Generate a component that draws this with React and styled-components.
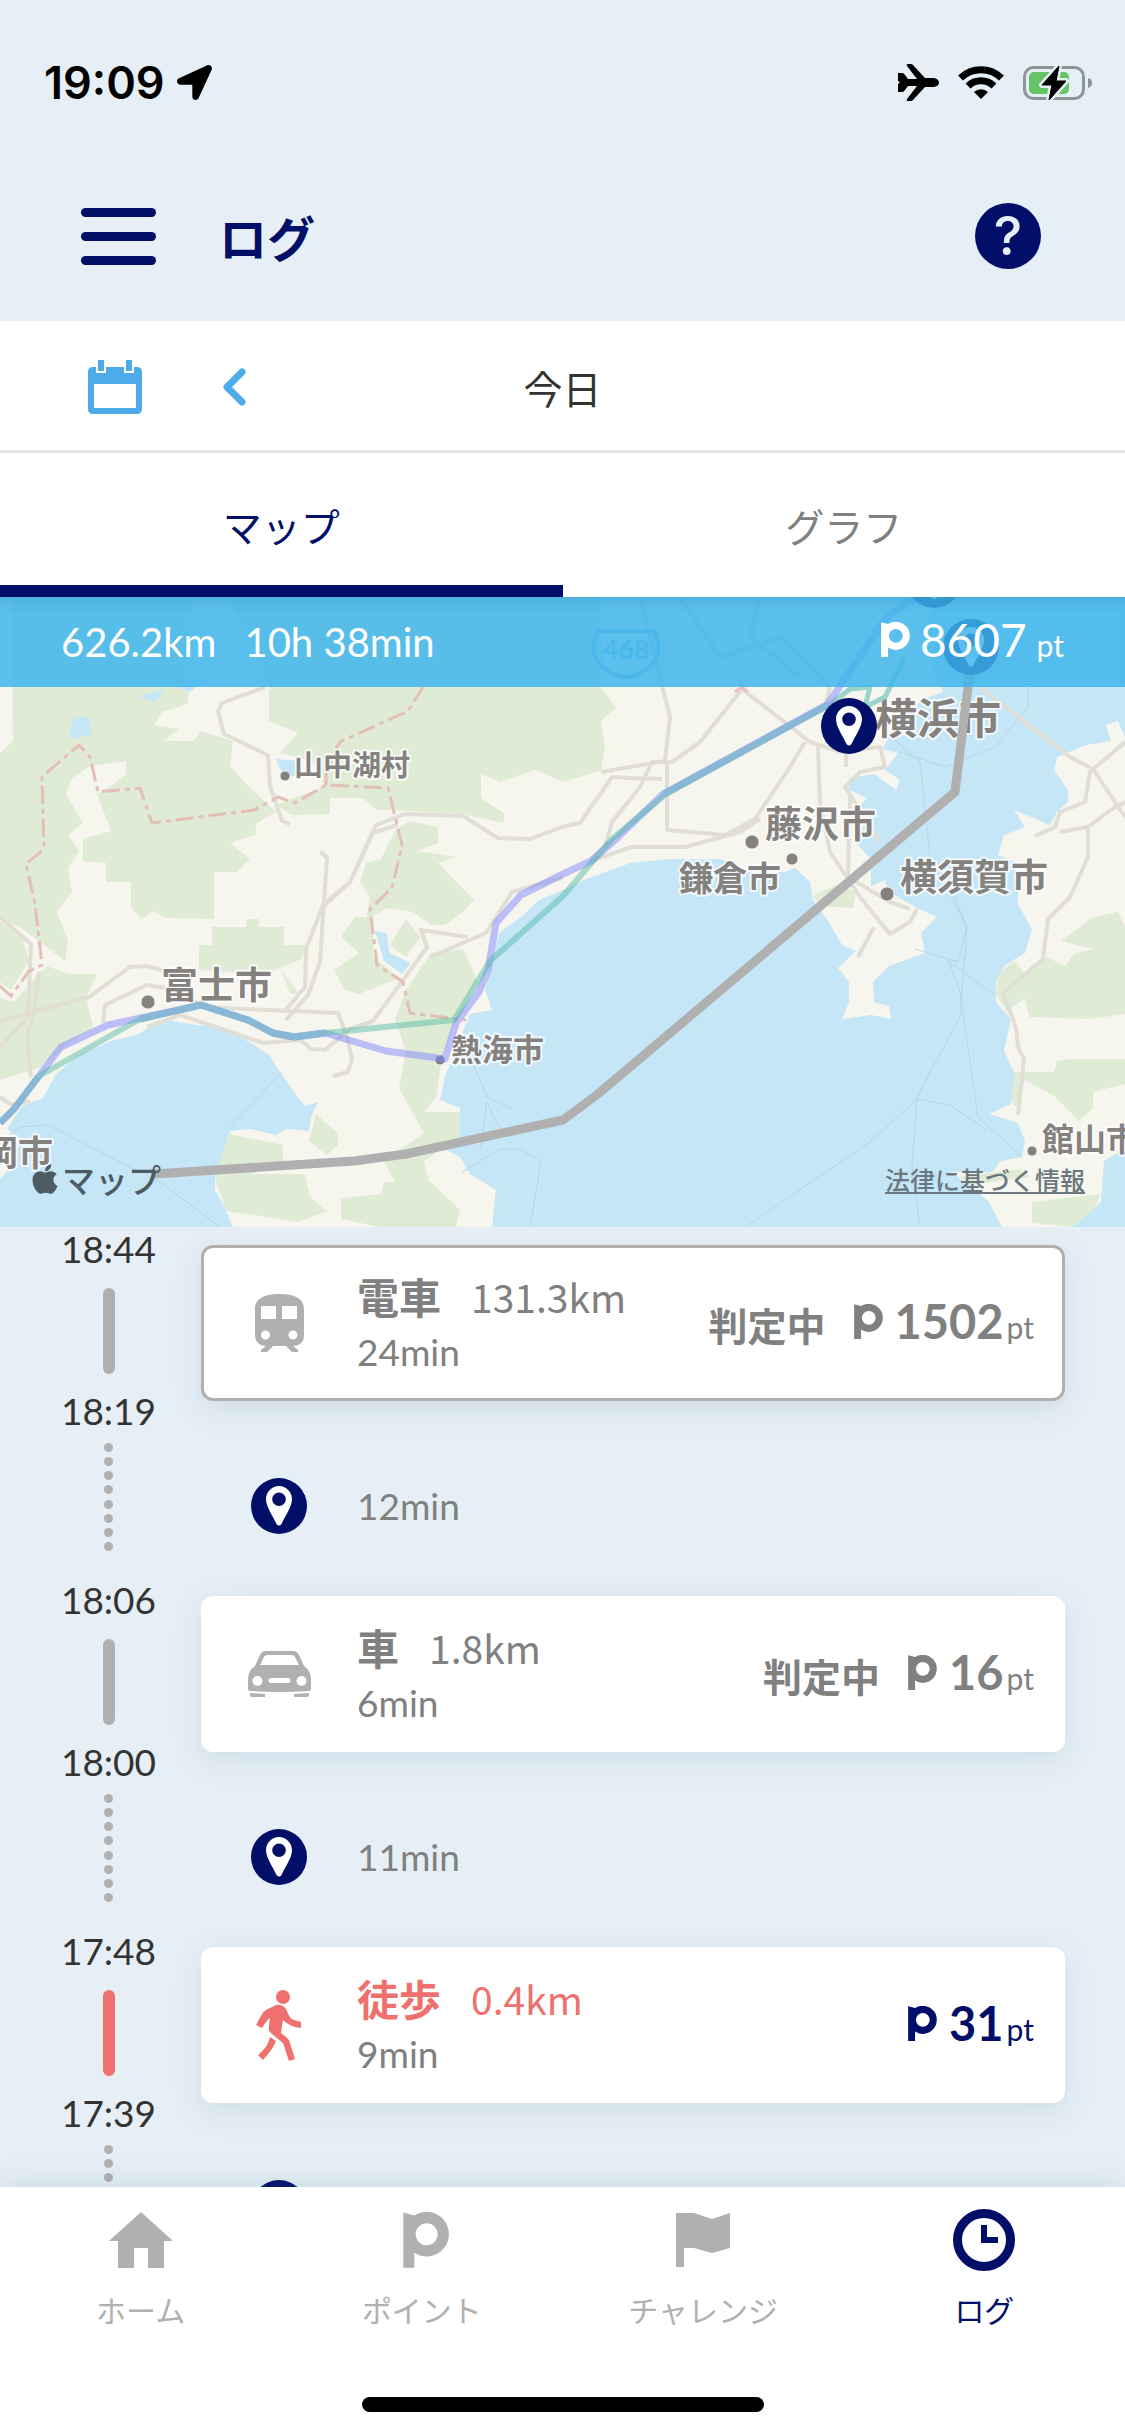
import React, { useState } from 'react';
import styled, { createGlobalStyle, ThemeProvider } from 'styled-components';
import { FaApple, FaLocationArrow } from 'react-icons/fa';

const theme = {
    navy: '#020f68',
    sky: '#4dabea',
    page: '#e6eff5',
    grey: '#808080',
    light: '#b0b0b0',
    coral: '#ee716d',
    text: '#333',
    latin: "Lato, 'Noto Sans CJK JP', sans-serif",
    japanese: "'Noto Sans CJK JP', sans-serif"
};

const GlobalStyle = createGlobalStyle`
    * {
        box-sizing: border-box;
    }

    body {
        margin: 0;
        background: ${theme.page};
        font-family: ${theme.japanese};
        color: ${theme.text};
    }

    button {
        border: 0;
        padding: 0;
        background: none;
        color: inherit;
        font: inherit;
        cursor: pointer;
    }

    svg {
        display: block;
    }
`;

const Screen = styled.div`
    display: flex;
    flex-direction: column;
    height: 100vh;
    overflow: hidden;
`;

const StatusBar = styled.div`
    display: flex;
    flex-shrink: 0;
    align-items: center;
    justify-content: space-between;
    height: 153px;
    padding: 12px 32px 0 44px;
    color: #000;
`;

const StatusGroup = styled.div`
    display: flex;
    align-items: center;
    gap: ${props => props.gap}px;
`;

const Clock = styled.span`
    font: 600 45px/48px Inter, sans-serif;
`;

const Header = styled.header`
    display: flex;
    flex-shrink: 0;
    align-items: center;
    height: 168px;
    padding: 0 84px 2px 81px;
    color: ${props => props.theme.navy};
`;

const MenuButton = styled.button`
    display: grid;
    gap: 15px;
    width: 75px;
`;

const MenuLine = styled.span`
    height: 9px;
    border-radius: 5px;
    background: ${props => props.theme.navy};
`;

const Title = styled.h1`
    flex: 1;
    margin: 0 0 0 63px;
    font-size: 48px;
    line-height: 60px;
    font-weight: 700;
`;

const HelpButton = styled.button`
    width: 66px;
    height: 66px;
    border-radius: 50%;
    background: ${props => props.theme.navy};

    && {
        color: ${props => props.theme.page};
        font: 500 54px/66px Inter, sans-serif;
    }
`;

const DateBar = styled.div`
    display: grid;
    grid-template-columns: 1fr auto 1fr;
    flex-shrink: 0;
    align-items: center;
    height: 132px;
    padding: 2px 88px 0;
    border-bottom: 3px solid #e3e3e3;
    background: #fff;
    font-size: 39px;
    line-height: 56px;
`;

const DateControls = styled.div`
    display: flex;
    align-items: center;
    gap: 79px;
`;

const Tabs = styled.div`
    display: flex;
    flex-shrink: 0;
    background: #fff;
`;

const Tab = styled.button`
    flex: 1;
    height: 144px;

    && {
        border-top: 12px solid transparent;
        border-bottom: 12px solid ${props => props.$active ? props.theme.navy : 'transparent'};
        color: ${props => props.$active ? props.theme.navy : props.theme.grey};
        font-size: 39px;
        line-height: 56px;
    }
`;

const MapArea = styled.section`
    position: relative;
    flex-shrink: 0;
    aspect-ratio: 1125 / 630;
    overflow: hidden;

    > svg {
        width: 100%;
        height: 100%;
    }
`;

const Summary = styled.div`
    position: absolute;
    top: 0;
    left: 0;
    right: 0;
    display: flex;
    align-items: center;
    gap: 28px;
    height: 90px;
    padding: 0 61px;
    background: rgba(62, 181, 236, 0.85);
    box-shadow: inset 0 12px 14px -10px rgba(40, 120, 160, 0.3);
    color: #fff;
    font: 40px/48px ${props => props.theme.latin};
`;

const SummaryPoints = styled.div`
    display: flex;
    align-items: baseline;
    gap: 10px;
    margin-left: auto;
    font-size: 46px;

    small {
        font-size: 30px;
    }
`;

const Attribution = styled.div`
    position: absolute;
    left: 28px;
    right: 40px;
    bottom: 24px;
    display: flex;
    align-items: center;
    justify-content: space-between;
    color: #4d5b62;

    a {
        color: #6b7880;
        font-size: 25px;
        line-height: 40px;
        font-weight: 500;
    }
`;

const MapBrand = styled.span`
    display: flex;
    align-items: center;
    font-size: 33px;
    line-height: 48px;
    font-weight: 500;
`;

const Timeline = styled.main`
    flex: 1;
    min-height: 0;
    overflow-y: auto;
    scrollbar-width: none;
`;

const Entry = styled.article`
    display: grid;
    grid-template-columns: 201px 1fr;
    padding-right: 60px;
`;

const TimeColumn = styled.div`
    display: flex;
    flex-direction: column;
    align-items: center;
    padding: 0 0 27px 16px;
`;

const Time = styled.time`
    font: 37px/44px ${props => props.theme.latin};
`;

const Bar = styled.span`
    width: 12px;
    height: 86px;
    margin: 17px 0 15px;
    border-radius: 6px;
    background: ${props => props.$color};
`;

const Dots = styled.span`
    display: flex;
    flex-direction: column;
    justify-content: space-between;
    height: 108px;
    margin-top: 10px;

    i {
        width: 9px;
        height: 9px;
        border-radius: 50%;
        background: ${props => props.theme.light};
    }
`;

const EntryBody = styled.div`
    padding-top: 18px;
`;

const Card = styled.div`
    display: grid;
    grid-template-columns: 156px 1fr auto;
    align-items: center;
    height: 156px;
    padding-right: 31px;
    border-radius: 12px;
    background: #fff;
    box-shadow: 0 8px 30px rgba(80, 130, 160, 0.16)${props => props.$selected ? `, inset 0 0 0 3px ${props.theme.light}` : ''};
`;

const IconCell = styled.div`
    display: flex;
    justify-content: center;
    color: ${props => props.$color};
`;

const Detail = styled.div`
    padding-top: 2px;
    color: ${props => props.theme.grey};
`;

const Mode = styled.div`
    display: flex;
    align-items: center;
    gap: 30px;
    color: ${props => props.$color};
    font-size: 39px;
    line-height: 56px;

    strong {
        font-size: 42px;
    }
`;

const Duration = styled.div`
    color: ${props => props.theme.grey};
    font: 37px/56px ${props => props.theme.latin};
`;

const Reward = styled.div`
    display: flex;
    align-items: center;
    gap: 28px;
    padding-top: 2px;
    color: ${props => props.$pending ? props.theme.grey : props.theme.navy};
    font-size: 39px;
    line-height: 56px;
    font-weight: 700;
`;

const Points = styled.span`
    display: flex;
    align-items: baseline;
    font: 700 47px/56px ${props => props.theme.latin};

    svg {
        margin-right: 12px;
    }

    small {
        margin-left: 3px;
        font-size: 30px;
        font-weight: 400;
    }
`;

const Stay = styled.div`
    display: grid;
    grid-template-columns: 156px 1fr;
    align-items: center;
    height: 177px;
    padding-top: 33px;
`;

const BottomNav = styled.nav`
    position: relative;
    flex-shrink: 0;
    padding: 22px 0 24px;
    background: #fff;
    box-shadow: 0 0 30px rgba(80, 130, 160, 0.22);
`;

const NavItems = styled.div`
    display: flex;
`;

const NavButton = styled.button`
    flex: 1;
    display: flex;
    flex-direction: column;
    align-items: center;
    gap: 18px;

    && {
        color: ${props => props.$active ? props.theme.navy : props.theme.light};
        font-size: 30px;
        line-height: 40px;
    }
`;

const NavIcon = styled.span`
    display: flex;
    align-items: center;
    height: 62px;
`;

const HomeIndicator = styled.div`
    width: 402px;
    height: 15px;
    margin: 68px auto 0;
    border-radius: 8px;
    background: #000;
`;

const PointMark = ({ height = 35 }) => (
    <svg width={Math.round(height * 0.83)} height={height} viewBox="0 0 137 167" fill="currentColor">
        <path
            fillRule="evenodd"
            d="M0 1L33 10A67 67 0 1 1 33 122V167H0ZM70 33a33 33 0 1 0 0 66a33 33 0 1 0 0-66Z"
        />
    </svg>
);

const NavPointMark = () => (
    <svg width="54" height="56" viewBox="-25 0 162 167" fill="currentColor">
        <path
            fillRule="evenodd"
            d="M0 1L33 10A67 67 0 1 1 33 122V167H0ZM70 33a33 33 0 1 0 0 66a33 33 0 1 0 0-66Z"
        />
    </svg>
);

const PlaneIcon = () => (
    <svg width="41" height="37" viewBox="0 0 41 37">
        <path d="M0 9H4Q6 9 7 11L10 15H19L9 2Q8 0 10 0H13Q14 0 15 1L27 14H36Q41 15 41 18.500T36 23H27L15 36Q14 37 13 37H10Q8 37 9 35L19 22H10L7 26Q6 28 4 28H0V20L2 18.500L0 17Z" />
    </svg>
);

const WifiIcon = () => (
    <svg width="46" height="34" viewBox="0 0 46 34">
        <g fill="none" stroke="#000" strokeWidth="7">
            <path d="M2.500 12A29.500 29.500 0 0 1 43.500 12" />
            <path d="M10 20A18.500 18.500 0 0 1 36 20" />
        </g>
        <path d="M16 26A10 10 0 0 1 30 26L23 33Z" />
    </svg>
);

const BatteryIcon = () => (
    <svg width="70" height="38" viewBox="0 -2 70 38">
        <rect x="1.500" y="1.500" width="59" height="31" rx="9" fill="none" stroke="#8f9497" strokeWidth="3" />
        <path d="M65 12Q69 13 69 17T65 22Z" fill="#8f9497" />
        <rect x="6" y="6" width="40" height="22" rx="5" fill="#64c466" />
        <path
            d="M36 0L19 19H29L26 34L43 15H33Z"
            stroke={theme.page}
            strokeWidth="6"
            strokeLinejoin="round"
            paintOrder="stroke"
        />
        <path d="M36 0L19 19H29L26 34L43 15H33Z" stroke="#000" strokeWidth="1" strokeLinejoin="round" />
    </svg>
);

const CalendarIcon = () => (
    <svg width="54" height="54" viewBox="0 0 54 54" fill={theme.sky}>
        <path
            fillRule="evenodd"
            d="M5 7H49Q54 7 54 12V49Q54 54 49 54H5Q0 54 0 49V12Q0 7 5 7ZM6 24V48H48V24Z"
        />
        <path d="M8 0H18V13H8ZM36 0H46V13H36Z" fill="#fff" />
        <path d="M10 0H16V11H10ZM38 0H44V11H38Z" />
    </svg>
);

const ChevronIcon = () => (
    <svg width="26" height="38" viewBox="0 0 26 38">
        <path d="M21 4L6 19L21 34" fill="none" stroke={theme.sky} strokeWidth="7" strokeLinecap="round" strokeLinejoin="round" />
    </svg>
);

const PinShape = () => (
    <g>
        <circle cx="28" cy="28" r="28" fill={theme.navy} />
        <path
            fill="#fff"
            fillRule="evenodd"
            d="M28 8C35 8 41 14 41 21C41 29 34 38 30.500 46Q28 49 25.500 46C22 38 15 29 15 21C15 14 21 8 28 8ZM28 14.500a6.800 6.800 0 1 0 0 13.600a6.800 6.800 0 1 0 0-13.600Z"
        />
    </g>
);

const PinIcon = () => (
    <svg width="56" height="56" viewBox="0 0 56 56">
        <PinShape />
    </svg>
);

const TrainIcon = () => (
    <svg width="49" height="58" viewBox="0 0 49 58" fill="currentColor">
        <path
            fillRule="evenodd"
            d="M0 15C0 3 12 0 24.500 0S49 3 49 15V42A10 10 0 0 1 39 52H10A10 10 0 0 1 0 42ZM6 12V25H21V12ZM27 12V25H42V12ZM10.500 36.500a4.500 4.500 0 1 0 0 9a4.500 4.500 0 1 0 0-9ZM38 36.500a4.500 4.500 0 1 0 0 9a4.500 4.500 0 1 0 0-9Z"
        />
        <path d="M12 51L6 56V58H12L19 51ZM37 51L43 56V58H37L30 51Z" />
    </svg>
);

const CarIcon = () => (
    <svg width="63" height="46" viewBox="0 0 63 46" fill="currentColor">
        <path
            fillRule="evenodd"
            d="M18 0H45Q49 0 51 4L56 15Q63 20 63 28V38Q63 40 61 40Q31 42 2 40Q0 40 0 38V28Q0 20 7 15L12 4Q14 0 18 0ZM19 4Q17 4 16 6L12 14H51L47 6Q46 4 44 4ZM9.500 25a5 5 0 1 0 0 10a5 5 0 1 0 0-10ZM53.500 25a5 5 0 1 0 0 10a5 5 0 1 0 0-10ZM23 27a2.500 2.500 0 0 0 0 5H40a2.500 2.500 0 0 0 0-5Z"
        />
        <path d="M2 42L17 43V46H4Q2 46 2 44ZM61 42L46 43V46H59Q61 46 61 44Z" />
    </svg>
);

const WalkIcon = () => (
    <svg width="46" height="71" viewBox="0 0 46 71" fill="currentColor">
        <circle cx="27" cy="7" r="7" />
        <path d="M0 35L5 26Q7 22 10 20L18 16Q21 14 24 15Q29 16 31 21Q33 27 36 29Q40 31 45 32V38Q34 37 27 30L25 43L30 47Q33 49 34 53L39 69L33 71L27 53L16 44Q12 41 13 36L14 28Q11 30 10 32L6 38Z" />
        <path d="M14 47L20 51L18 55Q16 60 7 70L2 65Q10 58 12 53Z" />
    </svg>
);

const HomeIcon = () => (
    <svg width="64" height="56" viewBox="0 0 64 56" fill="currentColor">
        <path d="M32 0L64 29H55V56H39V36H25V56H9V29H0Z" />
    </svg>
);

const FlagIcon = () => (
    <svg width="54" height="54" viewBox="0 0 54 54" fill="currentColor">
        <path d="M0 0H18L36 6L54 0V35L36 40L18 35H8V54H0Z" />
    </svg>
);

const ClockIcon = () => (
    <svg width="62" height="62" viewBox="0 0 62 62" fill="none" stroke="currentColor">
        <circle cx="31" cy="31" r="26.500" strokeWidth="9" />
        <path d="M31 16V31H45" strokeWidth="6" />
    </svg>
);

const greens = [
    '12,0 13,144 0,156 0,320 22,332 39,344 65,364 68,344 57,315 72,295 68,271 79,254 68,238 83,226 66,197 72,181 90,169 126,164 126,177 111,189 97,197 111,234 83,242 83,264 106,266 106,285 131,285 131,311 142,322 153,314 165,321 214,322 214,275 237,275 250,262 230,246 255,238 257,226 276,215 248,189 230,169 233,144 201,134 194,144 163,144 180,132 154,128 162,115 187,107 190,90 190,0',
    '230,0 269,90 269,124 298,136 280,156 312,164 325,189 276,208 292,218 330,217 330,201 363,201 377,213 395,213 463,217 503,226 505,217 481,201 481,177 500,185 535,173 563,185 601,173 605,148 601,124 616,111 601,90 601,0',
    '366,266 381,262 395,234 409,224 438,230 438,246 417,254 456,260 438,266 474,303 463,315 445,328 431,328 413,315 388,311 366,322 370,300 360,285',
    '355,320 373,320 373,360 399,381 359,397 345,393 334,373 359,356 341,340',
    '406,322 420,340 406,360 390,348',
    '431,356 463,352 478,385 456,422 442,462 436,500 424,515 460,515 460,540 424,564 431,593 395,585 384,564 424,536 399,491 406,454 395,422 406,393',
    '224,536 283,548 283,564 251,577 305,577 310,600 327,614 298,625 226,614 215,581',
    '316,517 338,536 338,548 327,558 309,544',
    '341,601 381,597 384,585 431,585 460,613 456,630 380,630 341,622',
    '212,330 246,330 246,322 259,322 259,330 284,330 284,348 305,348 302,362 280,371 266,377 199,373 199,348 212,348',
    '280,371 300,398 290,396',
    '47,369 68,377 97,377 86,401 93,430 65,450 39,471 0,483 0,401 14,405 39,377',
    '0,324 22,340 29,364 11,393 0,385',
    '813,299 838,287 856,295 853,311 820,309',
    '1118,315 1125,330 1125,417 1090,422 1029,420 1025,401 1007,415 996,397 998,377 1014,364 1025,377 1047,360 1065,369 1075,356 1093,352 1061,344 1093,320',
    '1011,475 1054,475 1057,464 1072,462 1125,462 1125,487 1093,495 1093,511 1079,524 1054,499 1025,483 1018,511 998,491',
    '960,580 1020,572 1030,580 970,588',
    '1032,605 1101,597 1090,620 1072,630 1032,626'
];

const waters = [
    '0,583 14,564 7,552 20,542 7,532 22,509 43,501 56,477 79,458 111,444 136,438 158,426 172,424 197,428 223,430 251,446 269,458 280,475 294,495 305,509 318,505 311,520 309,534 287,532 276,538 251,532 230,534 224,552 215,577 215,593 224,609 233,630 0,630',
    '492,630 496,593 470,577 460,560 445,552 460,540 460,511 440,503 445,479 452,462 460,442 470,417 492,413 485,393 492,364 499,336 521,320 539,303 563,293 584,283 630,266 670,262 720,262 742,271 785,275 795,271 810,285 813,303 828,324 842,348 856,354 838,371 849,385 849,405 842,422 871,418 891,422 889,409 874,405 873,385 889,369 925,356 921,336 937,320 917,311 889,295 885,283 871,289 871,262 856,246 867,222 856,213 867,201 849,193 849,181 874,177 896,193 900,183 885,173 898,156 882,152 896,128 921,103 943,95 920,34 939,0 1125,0 1125,140 1118,124 1106,128 1111,144 1086,148 1057,160 1054,173 1068,193 1068,205 1057,215 1050,228 1014,213 1025,230 1004,238 998,258 1018,266 1018,307 1032,332 1025,356 1004,369 996,385 996,405 1011,422 1004,454 1014,475 1011,507 989,517 1018,526 1025,544 1022,560 1000,564 993,575 950,575 968,587 989,605 1002,630',
    '1072,630 1083,622 1101,605 1104,564 1125,552 1125,630',
    '276,162 300,164 297,178 288,180 280,172',
    '74,120 88,120 92,137 79,141 68,140',
    '138,99 165,93 155,105',
    '178,90 195,82 205,84 190,95',
    '375,334 387,336 389,356 411,366 402,377 384,364'
];

const roads = [
    '265,90 222,106 218,114 224,137 268,158 270,189 282,224 290,227',
    '320,255 327,260 320,365 308,398 286,423',
    '284,415 305,390 306,352 323,308 350,285 362,260 376,228 405,217 463,219 498,241 530,242 562,230',
    '325,308 350,285 372,236 398,228',
    '0,424 89,400 130,370 147,369 180,378',
    '103,425 105,408 147,388 172,392 205,410 245,412 338,416 347,440 352,462 348,475 333,479',
    '147,430 180,418 263,446 300,443 311,452 325,453 350,432 373,424 401,386 427,350 421,333 468,340',
    '430,360 486,336 512,295 563,280',
    '0,320 31,347 28,420 0,450',
    '39,375 33,420 27,440 31,480',
    '601,175 665,164 670,120 650,40 640,0',
    '562,230 580,226 612,180 630,181 662,182',
    '605,250 612,225 640,190 652,165 672,165 700,145 742,92 740,80',
    '742,92 810,145 840,155 880,150 885,170 860,175 845,190 880,245',
    '667,165 667,233 725,238 755,222 790,170 805,145',
    '590,264 632,250 685,250 740,235 760,222',
    '830,90 825,110 846,130 846,170',
    '818,150 820,205 830,255 860,300 880,325 890,337 910,325 917,312',
    '874,330 858,360',
    '850,200 848,280 890,305 910,312',
    '980,90 1070,160 1093,172 1125,220',
    '1125,145 1090,175 1085,205 1060,215 1055,230 1035,239',
    '1125,205 1112,212 1088,230 1088,260 1070,300 1048,322 1043,362 1003,396 1016,430 1018,450 1024,462 1018,518',
    '1088,230 1060,235',
    '0,500 12,508 30,504',
    '680,0 720,60 780,40 830,90',
    '760,0 750,40 800,80'
];

const ferries = [
    '282,475 230,530',
    '0,545 20,530 48,528 160,585 220,630',
    '470,460 487,500 512,512',
    '462,575 500,552 520,552 541,565 530,630',
    '480,552 487,505 496,525 510,540',
    '880,130 920,165 930,260 967,330 960,420 917,500 912,570 920,630',
    '745,630 870,545 917,502 950,508 985,532',
    '950,290 967,330 958,365 915,352',
    '948,362 960,395 978,520 1022,560',
    '948,364 995,398',
    '900,155 945,170 995,150 1028,110 1028,90'
];

const teal = '39,479 140,422 201,408 248,423 273,436 294,440 325,436 345,434 454,423 490,364 563,299 612,242 666,197 828,108';
const violet = '39,479 61,450 108,428 201,408 248,423 273,436 294,440 325,436 386,454 445,462 456,426 479,395 488,373 496,326 521,298 563,277 591,264 616,242 663,197 828,107 885,22 907,5 934,0';

// stretches where both lines run together
const shared = [
    '0,526 14,512 39,479',
    '140,422 201,408 248,423 273,436 294,440 325,436',
    '664,197 828,108'
];

const cities = [
    { name: '山中湖村', x: 294, y: 179, size: 29, dot: [285, 179, 5] },
    { name: '富士市', x: 161, y: 402, size: 37, dot: [148, 405, 7] },
    { name: '熱海市', x: 451, y: 464, size: 31, dot: [440, 463, 5] },
    { name: '岡市', x: -17, y: 569, size: 35 },
    { name: '横浜市', x: 875, y: 137, size: 42 },
    { name: '藤沢市', x: 765, y: 241, size: 37, dot: [752, 245, 7] },
    { name: '鎌倉市', x: 679, y: 294, size: 34, dot: [792, 262, 6] },
    { name: '横須賀市', x: 900, y: 294, size: 37, dot: [887, 297, 7] },
    { name: '館山市', x: 1042, y: 554, size: 32, dot: [1032, 554, 5] }
];

const CityLabel = styled.text`
    fill: #85817e;
    stroke: rgba(255, 255, 255, 0.8);
    stroke-width: 4px;
    stroke-linejoin: round;
    paint-order: stroke;
    font-family: ${props => props.theme.japanese};
    font-weight: 700;
`;

const RoadNumber = styled.text`
    fill: #7fc3f2;
    font: 700 27px ${props => props.theme.latin};
    text-anchor: middle;
`;

const RouteMap = () => (
    <svg viewBox="0 0 1125 630" preserveAspectRatio="xMidYMid slice">
        <rect width="1125" height="630" fill="#f6f5ee" />
        <g fill="#e0ebd6">
            {greens.map(points => <polygon key={points} points={points} />)}
        </g>
        <g fill="#c5e6f7">
            {waters.map(points => <polygon key={points} points={points} />)}
        </g>
        <g fill="none" stroke="#b9d3e6" strokeWidth="1">
            {ferries.map(points => <polyline key={points} points={points} />)}
        </g>
        <g fill="none" stroke="#e0ded5" strokeWidth="4" strokeLinejoin="round">
            {roads.map(points => <polyline key={points} points={points} />)}
        </g>
        <g fill="none" stroke="#e3bfb8" strokeWidth="3" strokeDasharray="18 5 5 5">
            <polyline points="0,389 11,399 29,374 42,368 35,307 26,267 44,252 42,180 79,148 90,160 98,195 140,191 152,226 254,213 278,200 295,206 326,188 388,191 402,248 392,291 370,312 377,368 403,385 410,416 466,423" />
            <polyline points="326,188 326,177 337,150 340,145 408,114 423,90" />
            <polyline points="735,95 742,90 748,95" stroke="#eebfc0" />
        </g>
        <path d="M598 34H654Q664 56 651 68Q626 92 601 68Q588 56 598 34Z" fill="none" stroke="#8fc4ee" strokeWidth="4" />
        <RoadNumber x="626" y="62">468</RoadNumber>
        {cities.map(city => (
            <g key={city.name}>
                {city.dot && (
                    <circle cx={city.dot[0]} cy={city.dot[1]} r={city.dot[2]} fill="#85817e" stroke="#fff" strokeOpacity="0.7" strokeWidth="1" />
                )}
                <CityLabel x={city.x} y={city.y} fontSize={city.size}>{city.name}</CityLabel>
            </g>
        ))}
        <g fill="none" strokeLinejoin="round">
            <polyline points="828,109 850,92 870,90 865,110 885,100 905,60" stroke="#9bd4c8" strokeWidth="5" />
            <polyline points={violet} stroke="#7f88ff" strokeOpacity="0.5" strokeWidth="7" />
            <polyline points={teal} stroke="#4cb8a0" strokeOpacity="0.45" strokeWidth="6" />
            {shared.map(points => <polyline key={points} points={points} stroke="#88b8d6" strokeWidth="7" />)}
            <polyline points="154,577 354,564 406,557 563,523 598,497 955,195 968,90 971,54" stroke="#b0b0b0" strokeWidth="9" />
        </g>
        <g transform="translate(906 -45)"><PinShape /></g>
        <g transform="translate(943 22)"><PinShape /></g>
        <g transform="translate(821 101)"><PinShape /></g>
    </svg>
);

const entries = [
    { start: '18:19', end: '18:44', mode: '電車', distance: '131.3km', duration: '24min', stay: '12min', points: 1502, pending: true, selected: true, icon: TrainIcon },
    { start: '18:00', end: '18:06', mode: '車', distance: '1.8km', duration: '6min', stay: '11min', points: 16, pending: true, icon: CarIcon },
    { start: '17:39', end: '17:48', mode: '徒歩', distance: '0.4km', duration: '9min', points: 31, icon: WalkIcon }
];

const LogEntry = ({ entry }) => {
    const Icon = entry.icon;
    const accent = entry.pending ? theme.light : theme.coral;

    return (
        <Entry>
            <TimeColumn>
                <Time>{entry.end}</Time>
                <Bar $color={accent}/>
                <Time>{entry.start}</Time>
                <Dots>
                    {Array.from({ length: 8 }, (_, i) => <i key={i}/>)}
                </Dots>
            </TimeColumn>
            <EntryBody>
                <Card $selected={entry.selected}>
                    <IconCell $color={accent}><Icon/></IconCell>
                    <Detail>
                        <Mode $color={entry.pending ? theme.grey : theme.coral}>
                            <strong>{entry.mode}</strong>
                            <span>{entry.distance}</span>
                        </Mode>
                        <Duration>{entry.duration}</Duration>
                    </Detail>
                    <Reward $pending={entry.pending}>
                        {entry.pending && <span>判定中</span>}
                        <Points>
                            <PointMark/>
                            {entry.points}
                            <small>pt</small>
                        </Points>
                    </Reward>
                </Card>
                <Stay>
                    <IconCell><PinIcon/></IconCell>
                    <Duration>{entry.stay}</Duration>
                </Stay>
            </EntryBody>
        </Entry>
    );
};

const navItems = [
    { label: 'ホーム', icon: <HomeIcon/> },
    { label: 'ポイント', icon: <NavPointMark/> },
    { label: 'チャレンジ', icon: <FlagIcon/> },
    { label: 'ログ', icon: <ClockIcon/> }
];

const App = () => {
    const [tab, setTab] = useState('マップ');
    const [page, setPage] = useState('ログ');

    return (
        <ThemeProvider theme={theme}>
            <GlobalStyle/>
            <Screen>
                <StatusBar>
                    <StatusGroup gap={12}>
                        <Clock>19:09</Clock>
                        <FaLocationArrow size={35}/>
                    </StatusGroup>
                    <StatusGroup gap={19}>
                        <PlaneIcon/>
                        <WifiIcon/>
                        <BatteryIcon/>
                    </StatusGroup>
                </StatusBar>
                <Header>
                    <MenuButton aria-label="メニュー">
                        <MenuLine/>
                        <MenuLine/>
                        <MenuLine/>
                    </MenuButton>
                    <Title>ログ</Title>
                    <HelpButton aria-label="ヘルプ">?</HelpButton>
                </Header>
                <DateBar>
                    <DateControls>
                        <button aria-label="カレンダー"><CalendarIcon/></button>
                        <button aria-label="前の日"><ChevronIcon/></button>
                    </DateControls>
                    <span>今日</span>
                </DateBar>
                <Tabs role="tablist">
                    {['マップ', 'グラフ'].map(name => (
                        <Tab key={name} role="tab" aria-selected={tab === name} $active={tab === name} onClick={() => setTab(name)}>
                            {name}
                        </Tab>
                    ))}
                </Tabs>
                <MapArea>
                    <RouteMap/>
                    <Summary>
                        <span>626.2km</span>
                        <span>10h 38min</span>
                        <SummaryPoints>
                            <PointMark/>
                            <span>8607</span>
                            <small>pt</small>
                        </SummaryPoints>
                    </Summary>
                    <Attribution>
                        <MapBrand><FaApple size={34}/>マップ</MapBrand>
                        <a href="#legal">法律に基づく情報</a>
                    </Attribution>
                </MapArea>
                <Timeline>
                    {entries.map(entry => <LogEntry key={entry.end} entry={entry}/>)}
                </Timeline>
                <BottomNav>
                    <NavItems>
                        {navItems.map(item => (
                            <NavButton key={item.label} $active={page === item.label} onClick={() => setPage(item.label)}>
                                <NavIcon>{item.icon}</NavIcon>
                                {item.label}
                            </NavButton>
                        ))}
                    </NavItems>
                    <HomeIndicator/>
                </BottomNav>
            </Screen>
        </ThemeProvider>
    );
};

export default App;
